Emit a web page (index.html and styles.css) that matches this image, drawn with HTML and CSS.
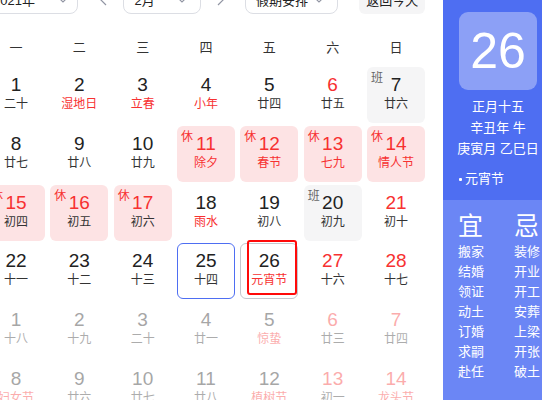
FILE: index.html
```html
<!DOCTYPE html>
<html lang="zh-CN">
<head>
<meta charset="utf-8">
<title>万年历</title>
<link rel="stylesheet" href="styles.css">
</head>
<body>
<div class="page">
  <div class="main">
    <div class="toolbar">
      <div class="select year"><span>2021年</span><svg class="chev" width="12" height="7" viewBox="0 0 12 7"><polyline points="1,1 6,6 11,1" fill="none" stroke="#9195a3" stroke-width="1.2"/></svg></div>
      <span class="nav prev"><svg width="8" height="14" viewBox="0 0 8 14"><polyline points="7,1 1,7 7,13" fill="none" stroke="#9195a3" stroke-width="1.2"/></svg></span>
      <div class="select month"><span>2月</span><svg class="chev" width="12" height="7" viewBox="0 0 12 7"><polyline points="1,1 6,6 11,1" fill="none" stroke="#9195a3" stroke-width="1.2"/></svg></div>
      <span class="nav next"><svg width="8" height="14" viewBox="0 0 8 14"><polyline points="1,1 7,7 1,13" fill="none" stroke="#9195a3" stroke-width="1.2"/></svg></span>
      <div class="select holiday"><span>假期安排</span><svg class="chev" width="12" height="7" viewBox="0 0 12 7"><polyline points="1,1 6,6 11,1" fill="none" stroke="#9195a3" stroke-width="1.2"/></svg></div>
      <div class="today-btn">返回今天</div>
    </div>

    <div class="weekdays">
      <span>一</span><span>二</span><span>三</span><span>四</span><span>五</span><span>六</span><span>日</span>
    </div>

    <div class="grid">
      <div class="cell"><span class="num">1</span><span class="lunar">二十</span></div>
      <div class="cell"><span class="num">2</span><span class="lunar fest">湿地日</span></div>
      <div class="cell"><span class="num">3</span><span class="lunar fest">立春</span></div>
      <div class="cell"><span class="num">4</span><span class="lunar fest">小年</span></div>
      <div class="cell"><span class="num">5</span><span class="lunar">廿四</span></div>
      <div class="cell weekend"><span class="num">6</span><span class="lunar">廿五</span></div>
      <div class="cell work"><span class="tag">班</span><span class="num">7</span><span class="lunar">廿六</span></div>

      <div class="cell"><span class="num">8</span><span class="lunar">廿七</span></div>
      <div class="cell"><span class="num">9</span><span class="lunar">廿八</span></div>
      <div class="cell"><span class="num">10</span><span class="lunar">廿九</span></div>
      <div class="cell rest"><span class="tag">休</span><span class="num">11</span><span class="lunar fest">除夕</span></div>
      <div class="cell rest"><span class="tag">休</span><span class="num">12</span><span class="lunar fest">春节</span></div>
      <div class="cell rest"><span class="tag">休</span><span class="num">13</span><span class="lunar fest">七九</span></div>
      <div class="cell rest"><span class="tag">休</span><span class="num">14</span><span class="lunar fest">情人节</span></div>

      <div class="cell rest"><span class="tag">休</span><span class="num">15</span><span class="lunar">初四</span></div>
      <div class="cell rest"><span class="tag">休</span><span class="num">16</span><span class="lunar">初五</span></div>
      <div class="cell rest"><span class="tag">休</span><span class="num">17</span><span class="lunar">初六</span></div>
      <div class="cell"><span class="num">18</span><span class="lunar fest">雨水</span></div>
      <div class="cell"><span class="num">19</span><span class="lunar">初八</span></div>
      <div class="cell work"><span class="tag">班</span><span class="num">20</span><span class="lunar">初九</span></div>
      <div class="cell weekend"><span class="num">21</span><span class="lunar">初十</span></div>

      <div class="cell"><span class="num">22</span><span class="lunar">十一</span></div>
      <div class="cell"><span class="num">23</span><span class="lunar">十二</span></div>
      <div class="cell"><span class="num">24</span><span class="lunar">十三</span></div>
      <div class="cell hover"><span class="num">25</span><span class="lunar">十四</span></div>
      <div class="cell today"><span class="num">26</span><span class="lunar fest">元宵节</span><span class="mark"></span></div>
      <div class="cell weekend"><span class="num">27</span><span class="lunar">十六</span></div>
      <div class="cell weekend"><span class="num">28</span><span class="lunar">十七</span></div>

      <div class="cell other"><span class="num">1</span><span class="lunar">十八</span></div>
      <div class="cell other"><span class="num">2</span><span class="lunar">十九</span></div>
      <div class="cell other"><span class="num">3</span><span class="lunar">二十</span></div>
      <div class="cell other"><span class="num">4</span><span class="lunar">廿一</span></div>
      <div class="cell other"><span class="num">5</span><span class="lunar fest">惊蛰</span></div>
      <div class="cell other weekend"><span class="num">6</span><span class="lunar">廿三</span></div>
      <div class="cell other weekend"><span class="num">7</span><span class="lunar">廿四</span></div>

      <div class="cell other"><span class="num">8</span><span class="lunar fest">妇女节</span></div>
      <div class="cell other"><span class="num">9</span><span class="lunar">廿六</span></div>
      <div class="cell other"><span class="num">10</span><span class="lunar">廿七</span></div>
      <div class="cell other"><span class="num">11</span><span class="lunar">廿八</span></div>
      <div class="cell other"><span class="num">12</span><span class="lunar fest">植树节</span></div>
      <div class="cell other weekend"><span class="num">13</span><span class="lunar">初一</span></div>
      <div class="cell other weekend"><span class="num">14</span><span class="lunar fest">龙头节</span></div>
    </div>
  </div>

  <aside class="panel">
    <div class="panel-top">
      <div class="big-date">26</div>
      <div class="info">
        <div>正月十五</div>
        <div>辛丑年 牛</div>
        <div>庚寅月 乙巳日</div>
      </div>
      <div class="festival"><span class="dot"></span>元宵节</div>
    </div>
    <div class="panel-bottom">
      <div class="col">
        <div class="col-head">宜</div>
        <div>搬家</div><div>结婚</div><div>领证</div><div>动土</div><div>订婚</div><div>求嗣</div><div>赴任</div>
      </div>
      <div class="col">
        <div class="col-head">忌</div>
        <div>装修</div><div>开业</div><div>开工</div><div>安葬</div><div>上梁</div><div>开张</div><div>破土</div>
      </div>
    </div>
  </aside>
</div>
</body>
</html>
```

FILE: styles.css
```css
html, body {
  margin: 0;
  padding: 0;
  overflow: hidden;
  background: #fff;
}

body {
  font-family: "Liberation Sans", "Noto Sans CJK SC", sans-serif;
  color: #222;
}

.page {
  display: flex;
  align-items: flex-start;
  margin: -16px 0 0 -13px;
  width: 580px;
}

.main {
  width: 438px;
  flex: none;
}

/* toolbar */
.toolbar {
  display: flex;
  align-items: center;
  height: 30px;
  font-size: 13px;
  color: #222;
}

.select {
  box-sizing: border-box;
  height: 30px;
  border: 1px solid #dcdee4;
  border-radius: 8px;
  display: flex;
  align-items: center;
  justify-content: space-between;
  padding: 0 12px 0 10px;
}

.select.year { width: 92px; padding: 0 8px 0 5px; }
.select.month { width: 78px; }
.select.holiday { width: 94px; }

.chev { display: block; }

.nav { display: flex; align-items: center; }
.nav svg { display: block; }
.nav.prev { margin: 0 16px 0 21px; }
.nav.next { margin: 0 20px 0 16px; }

.today-btn {
  box-sizing: border-box;
  width: 66px;
  height: 30px;
  margin-left: 21px;
  border-radius: 6px;
  background: #f5f5f6;
  display: flex;
  align-items: center;
  justify-content: center;
}

/* weekdays */
.weekdays {
  display: grid;
  grid-template-columns: repeat(7, 58px);
  column-gap: 5.33px;
  margin-top: 22px;
  height: 24px;
  line-height: 24px;
  font-size: 13px;
  color: #333;
  text-align: center;
}

/* grid */
.grid {
  display: grid;
  grid-template-columns: repeat(7, 58px);
  grid-auto-rows: 56px;
  column-gap: 5.33px;
  row-gap: 2.75px;
  margin-top: 7px;
}

.cell {
  position: relative;
  box-sizing: border-box;
  border-radius: 6px;
  display: flex;
  flex-direction: column;
  align-items: center;
  padding-top: 7px;
}

.num {
  font-size: 19px;
  line-height: 22px;
  color: #222;
}

.lunar {
  font-size: 12px;
  line-height: 16px;
  color: #333;
}

.lunar.fest { color: #f73131; }

.cell.weekend .num,
.cell.rest .num { color: #f73131; }

.cell.rest { background: #fde3e4; }
.cell.work { background: #f5f5f6; }

.tag {
  position: absolute;
  top: 3px;
  left: 4px;
  font-size: 12px;
  line-height: 16px;
  color: #f73131;
}

.cell.work .tag { color: #666; }

.cell.other { opacity: 0.4; }

.cell.hover { border: 1.5px solid #4e6ef2; padding-top: 5.5px; }
.cell.today { border: 1px solid #c4c7ce; padding-top: 6px; }

.mark {
  position: absolute;
  left: 6px;
  top: -4px;
  width: 50px;
  height: 55px;
  box-sizing: border-box;
  border: 2.6px solid #ff0a0a;
  border-radius: 3px;
}

/* panel */
.panel {
  flex: none;
  width: 110px;
  margin-left: 18px;
  color: #fff;
  font-size: 13px;
}

.panel-top {
  background: #4e6ef2;
  padding: 28px 0 10px;
  height: 216px;
  box-sizing: border-box;
}

.big-date {
  width: 78px;
  height: 78px;
  margin: 0 auto;
  border-radius: 9px;
  background: #8ca0f6;
  font-size: 50px;
  line-height: 78px;
  text-align: center;
}

.info {
  margin-top: 6px;
  text-align: center;
  line-height: 21px;
}

.festival {
  display: flex;
  align-items: center;
  margin: 10px 0 0 16px;
  line-height: 20px;
}

.dot {
  width: 3px;
  height: 3px;
  background: #fff;
  border-radius: 1px;
  margin-right: 3px;
}

.panel-bottom {
  background: #6b86f5;
  height: 240px;
  display: flex;
  gap: 30px;
  padding: 11px 0 0 15px;
  box-sizing: border-box;
}

.col {
  width: 26px;
  line-height: 20px;
  white-space: nowrap;
}

.col-head {
  font-size: 25px;
  line-height: 30px;
  margin-bottom: 1px;
}
```
